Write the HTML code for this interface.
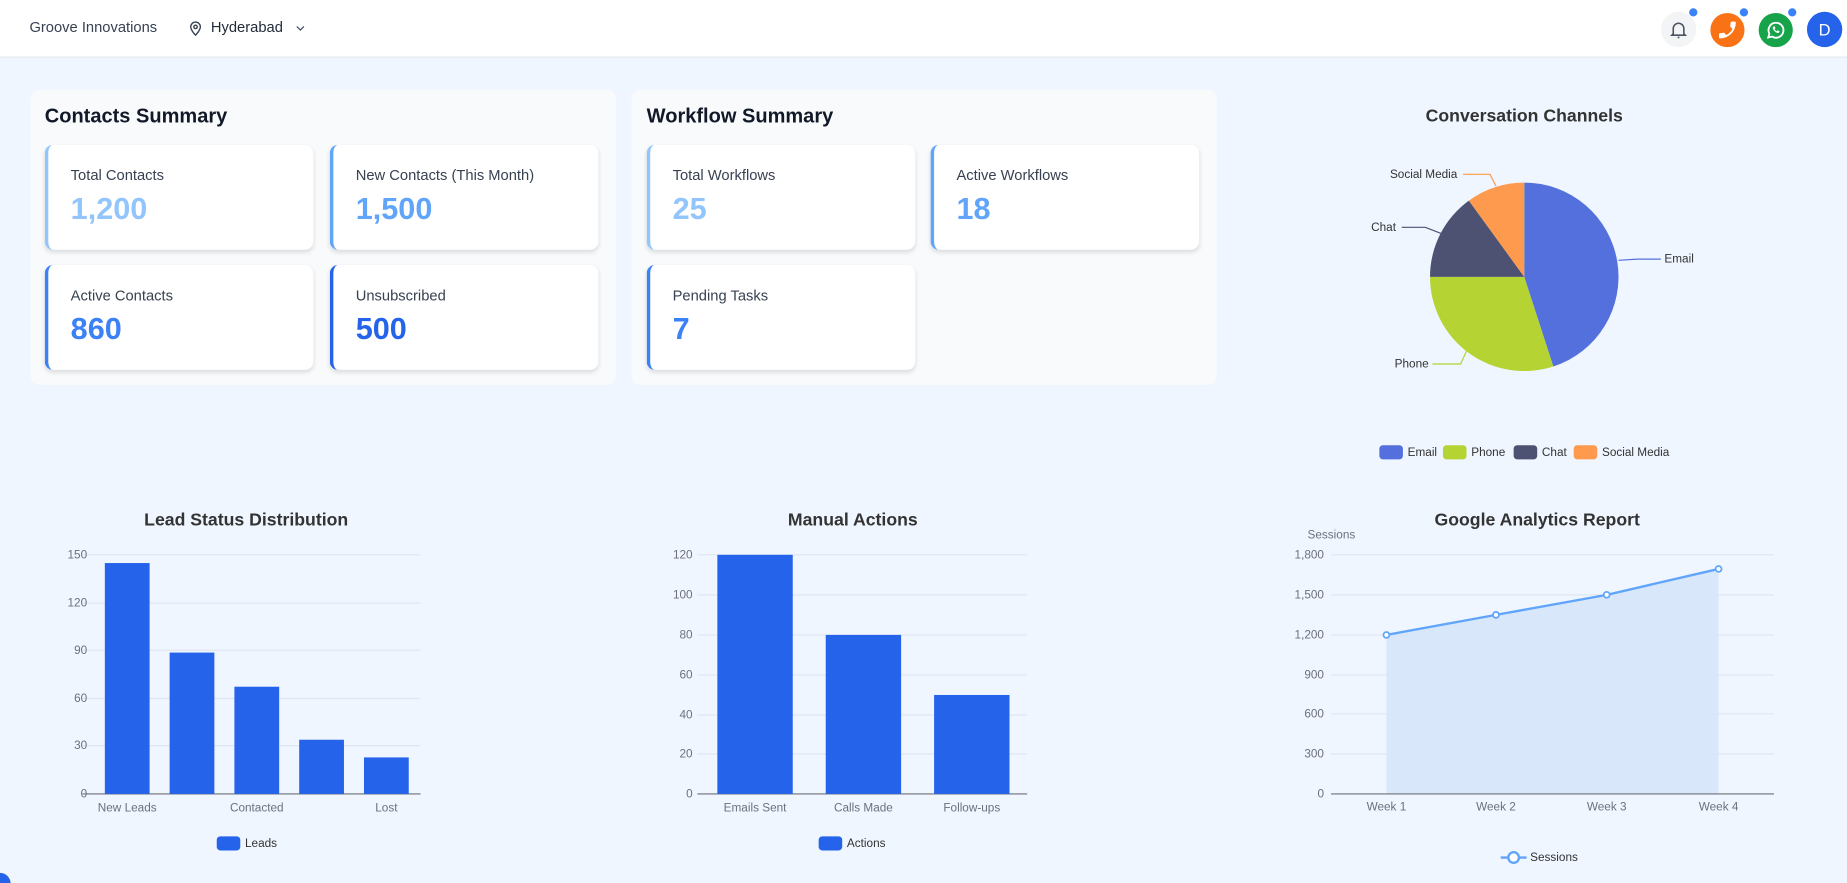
<!DOCTYPE html>
<html><head><meta charset="utf-8">
<style>
html,body{margin:0;padding:0;width:1847px;height:883px;overflow:hidden;background:#eff6ff;}
#s{width:1568px;height:750px;transform:scale(1.17793);transform-origin:0 0;position:relative;font-family:"Liberation Sans",sans-serif;background:#eff6ff;}
.hdr{position:absolute;left:0;top:0;width:1568px;height:48px;background:#fff;border-bottom:1px solid #e2e8f0;}
.abs{position:absolute;}
.panel{position:absolute;background:#f8fafc;border-radius:8px;}
.ptitle{position:absolute;font-weight:bold;font-size:17px;color:#111827;}
.card{position:absolute;width:228px;height:89px;background:#fff;border-radius:7px;box-shadow:0 2px 4px rgba(0,0,0,.12);border-left:3px solid #93c5fd;box-sizing:border-box;}
.card .l{position:absolute;left:19px;top:19px;font-size:12.5px;color:#374151;}
.card .v{position:absolute;left:19px;top:39px;font-size:26px;font-weight:bold;}
svg text{font-family:"Liberation Sans",sans-serif;}
</style></head><body><div id="s">
<div class="hdr">
<div class="abs" style="left:25px;top:16px;font-size:12.5px;color:#374151">Groove Innovations</div>
<svg class="abs" style="left:159px;top:16px" width="14" height="16" viewBox="0 0 24 24" fill="none" stroke="#374151" stroke-width="2"><path d="M12 22s-7-7-7-12a7 7 0 0 1 14 0c0 5-7 12-7 12z"/><circle cx="12" cy="10" r="2.5"/></svg>
<div class="abs" style="left:179px;top:16px;font-size:12.5px;color:#1f2937">Hyderabad</div>
<svg class="abs" style="left:249px;top:18px" width="12" height="12" viewBox="0 0 24 24" fill="none" stroke="#374151" stroke-width="2"><path d="M6 9l6 6 6-6"/></svg>
<div class="abs" style="left:1410px;top:10px;width:30px;height:30px;border-radius:50%;background:#f3f4f6"></div>
<svg class="abs" style="left:1416px;top:15px" width="18" height="20" viewBox="0 0 24 24" fill="none" stroke="#4b5563" stroke-width="1.8"><path d="M6 17V11a6 6 0 0 1 12 0v6l1.5 1.5h-15z"/><path d="M11 21h2"/></svg>
<div class="abs" style="left:1434px;top:7px;width:7px;height:7px;border-radius:50%;background:#3b82f6"></div>
<div class="abs" style="left:1452px;top:11px;width:29px;height:29px;border-radius:50%;background:#f97316"></div>
<svg class="abs" style="left:1457px;top:16px" width="19" height="19" viewBox="0 0 24 24"><path fill="#fff" d="M20 15.5c-1.2 0-2.4-.2-3.6-.6a1 1 0 0 0-1 .2l-2.2 2.2a15 15 0 0 1-6.6-6.6l2.2-2.2a1 1 0 0 0 .3-1A11 11 0 0 1 8.5 4a1 1 0 0 0-1-1H4a1 1 0 0 0-1 1 17 17 0 0 0 17 17 1 1 0 0 0 1-1v-3.5a1 1 0 0 0-1-1z" transform="scale(-1,1) translate(-24,0)"/></svg>
<div class="abs" style="left:1477px;top:7px;width:7px;height:7px;border-radius:50%;background:#3b82f6"></div>
<div class="abs" style="left:1493px;top:11px;width:29px;height:29px;border-radius:50%;background:#16a34a"></div>
<svg class="abs" style="left:1498px;top:16px" width="19" height="19" viewBox="0 0 24 24" fill="none" stroke="#fff" stroke-width="2"><path d="M4 20l1.2-4A8 8 0 1 1 8 19z"/><path d="M9 9c0 3 3 6 6 6l1-1.5-2-1-1 1c-1-.5-2-1.5-2.5-2.5l1-1-1-2z" fill="#fff" stroke-width="0.5"/></svg>
<div class="abs" style="left:1518px;top:7px;width:7px;height:7px;border-radius:50%;background:#3b82f6"></div>
<div class="abs" style="left:1534px;top:10px;width:30px;height:30px;border-radius:50%;background:#2563eb;color:#fff;font-size:14px;text-align:center;line-height:30px">D</div>
</div>

<div class="panel" style="left:26px;top:76px;width:497px;height:251px"></div>
<div class="ptitle" style="left:38px;top:89px">Contacts Summary</div>
<div class="card" style="left:38px;top:123px"><div class="l">Total Contacts</div><div class="v" style="color:#93c5fd">1,200</div></div>
<div class="card" style="left:280px;top:123px;border-left-color:#60a5fa"><div class="l">New Contacts (This Month)</div><div class="v" style="color:#60a5fa">1,500</div></div>
<div class="card" style="left:38px;top:225px;border-left-color:#3b82f6"><div class="l">Active Contacts</div><div class="v" style="color:#3b82f6">860</div></div>
<div class="card" style="left:280px;top:225px;border-left-color:#2563eb"><div class="l">Unsubscribed</div><div class="v" style="color:#2563eb">500</div></div>

<div class="panel" style="left:536px;top:76px;width:497px;height:251px"></div>
<div class="ptitle" style="left:549px;top:89px">Workflow Summary</div>
<div class="card" style="left:549px;top:123px"><div class="l">Total Workflows</div><div class="v" style="color:#93c5fd">25</div></div>
<div class="card" style="left:790px;top:123px;border-left-color:#60a5fa"><div class="l">Active Workflows</div><div class="v" style="color:#60a5fa">18</div></div>
<div class="card" style="left:549px;top:225px;border-left-color:#3b82f6"><div class="l">Pending Tasks</div><div class="v" style="color:#3b82f6">7</div></div>

<svg class="abs" style="left:0;top:0" width="1568" height="750">
<text x="1294" y="103" text-anchor="middle" font-size="15" font-weight="bold" fill="#333">Conversation Channels</text>
<path d="M1294,235 L1294,155 A80,80 0 0 1 1318.7,311.1 Z" fill="#5470dc"/>
<path d="M1294,235 L1318.7,311.1 A80,80 0 0 1 1214,235 Z" fill="#b5d333"/>
<path d="M1294,235 L1214,235 A80,80 0 0 1 1247,170.3 Z" fill="#4e5272"/>
<path d="M1294,235 L1247,170.3 A80,80 0 0 1 1294,155 Z" fill="#fd9a4d"/>
<g fill="none" stroke-width="1">
<path d="M1374,221 L1390,220 L1410,220" stroke="#5470dc"/>
<path d="M1245,298 L1240,309 L1216,309" stroke="#b5d333"/>
<path d="M1228,200 L1210,193 L1190,193" stroke="#4e5272"/>
<path d="M1270,158 L1265,148 L1242,148" stroke="#fd9a4d"/>
</g>
<g font-size="10" fill="#333">
<text x="1413" y="223">Email</text><text x="1184" y="312">Phone</text><text x="1164" y="196">Chat</text><text x="1180" y="151">Social Media</text>
</g>
<g font-size="10" fill="#333">
<rect x="1171" y="378" width="20" height="12" rx="3" fill="#5470dc"/><text x="1195" y="387">Email</text>
<rect x="1225" y="378" width="20" height="12" rx="3" fill="#b5d333"/><text x="1249" y="387">Phone</text>
<rect x="1285" y="378" width="20" height="12" rx="3" fill="#4e5272"/><text x="1309" y="387">Chat</text>
<rect x="1336" y="378" width="20" height="12" rx="3" fill="#fd9a4d"/><text x="1360" y="387">Social Media</text>
</g>

<text x="209" y="446" text-anchor="middle" font-size="15" font-weight="bold" fill="#333">Lead Status Distribution</text>
<g stroke="#e0e6f1"><path d="M70,471H357M70,512H357M70,552H357M70,593H357M70,633H357"/></g>
<path d="M70,674H357" stroke="#6e7079"/>
<g fill="#2563eb"><rect x="89" y="478" width="38" height="196"/><rect x="144" y="554" width="38" height="120"/><rect x="199" y="583" width="38" height="91"/><rect x="254" y="628" width="38" height="46"/><rect x="309" y="643" width="38" height="31"/></g>
<g font-size="10" fill="#6e7079" text-anchor="end"><text x="74" y="474">150</text><text x="74" y="515">120</text><text x="74" y="555">90</text><text x="74" y="596">60</text><text x="74" y="636">30</text><text x="74" y="677">0</text></g>
<g font-size="10" fill="#6e7079" text-anchor="middle"><text x="108" y="689">New Leads</text><text x="218" y="689">Contacted</text><text x="328" y="689">Lost</text></g>
<rect x="184" y="710" width="20" height="12" rx="3" fill="#2563eb"/><text x="208" y="719" font-size="10" fill="#333">Leads</text>

<text x="724" y="446" text-anchor="middle" font-size="15" font-weight="bold" fill="#333">Manual Actions</text>
<g stroke="#e0e6f1"><path d="M592,471H872M592,505H872M592,539H872M592,573H872M592,607H872M592,640H872"/></g>
<path d="M592,674H872" stroke="#6e7079"/>
<g fill="#2563eb"><rect x="609" y="471" width="64" height="203"/><rect x="701" y="539" width="64" height="135"/><rect x="793" y="590" width="64" height="84"/></g>
<g font-size="10" fill="#6e7079" text-anchor="end"><text x="588" y="474">120</text><text x="588" y="508">100</text><text x="588" y="542">80</text><text x="588" y="576">60</text><text x="588" y="610">40</text><text x="588" y="643">20</text><text x="588" y="677">0</text></g>
<g font-size="10" fill="#6e7079" text-anchor="middle"><text x="641" y="689">Emails Sent</text><text x="733" y="689">Calls Made</text><text x="825" y="689">Follow-ups</text></g>
<rect x="695" y="710" width="20" height="12" rx="3" fill="#2563eb"/><text x="719" y="719" font-size="10" fill="#333">Actions</text>

<text x="1305" y="446" text-anchor="middle" font-size="15" font-weight="bold" fill="#333">Google Analytics Report</text>
<text x="1110" y="457" font-size="10" fill="#6e7079">Sessions</text>
<g stroke="#e0e6f1"><path d="M1130,471H1506M1130,505H1506M1130,539H1506M1130,573H1506M1130,606H1506M1130,640H1506"/></g>
<path d="M1177,539 L1270,522 L1364,505 L1459,483 L1459,674 L1177,674Z" fill="#d6e6fb" opacity=".9"/>
<path d="M1130,674H1506" stroke="#6e7079"/>
<path d="M1177,539 L1270,522 L1364,505 L1459,483" fill="none" stroke="#60a5fa" stroke-width="2"/>
<g fill="#fff" stroke="#60a5fa" stroke-width="1.5"><circle cx="1177" cy="539" r="2.5"/><circle cx="1270" cy="522" r="2.5"/><circle cx="1364" cy="505" r="2.5"/><circle cx="1459" cy="483" r="2.5"/></g>
<g font-size="10" fill="#6e7079" text-anchor="end"><text x="1124" y="474">1,800</text><text x="1124" y="508">1,500</text><text x="1124" y="542">1,200</text><text x="1124" y="576">900</text><text x="1124" y="609">600</text><text x="1124" y="643">300</text><text x="1124" y="677">0</text></g>
<g font-size="10" fill="#6e7079" text-anchor="middle"><text x="1177" y="688">Week 1</text><text x="1270" y="688">Week 2</text><text x="1364" y="688">Week 3</text><text x="1459" y="688">Week 4</text></g>
<path d="M1274,728H1296" stroke="#60a5fa" stroke-width="2"/><circle cx="1285" cy="728" r="4.5" fill="#fff" stroke="#60a5fa" stroke-width="2"/>
<text x="1299" y="731" font-size="10" fill="#333">Sessions</text>
<circle cx="0" cy="750" r="9" fill="#2563eb"/>
</svg>
</div></body></html>
